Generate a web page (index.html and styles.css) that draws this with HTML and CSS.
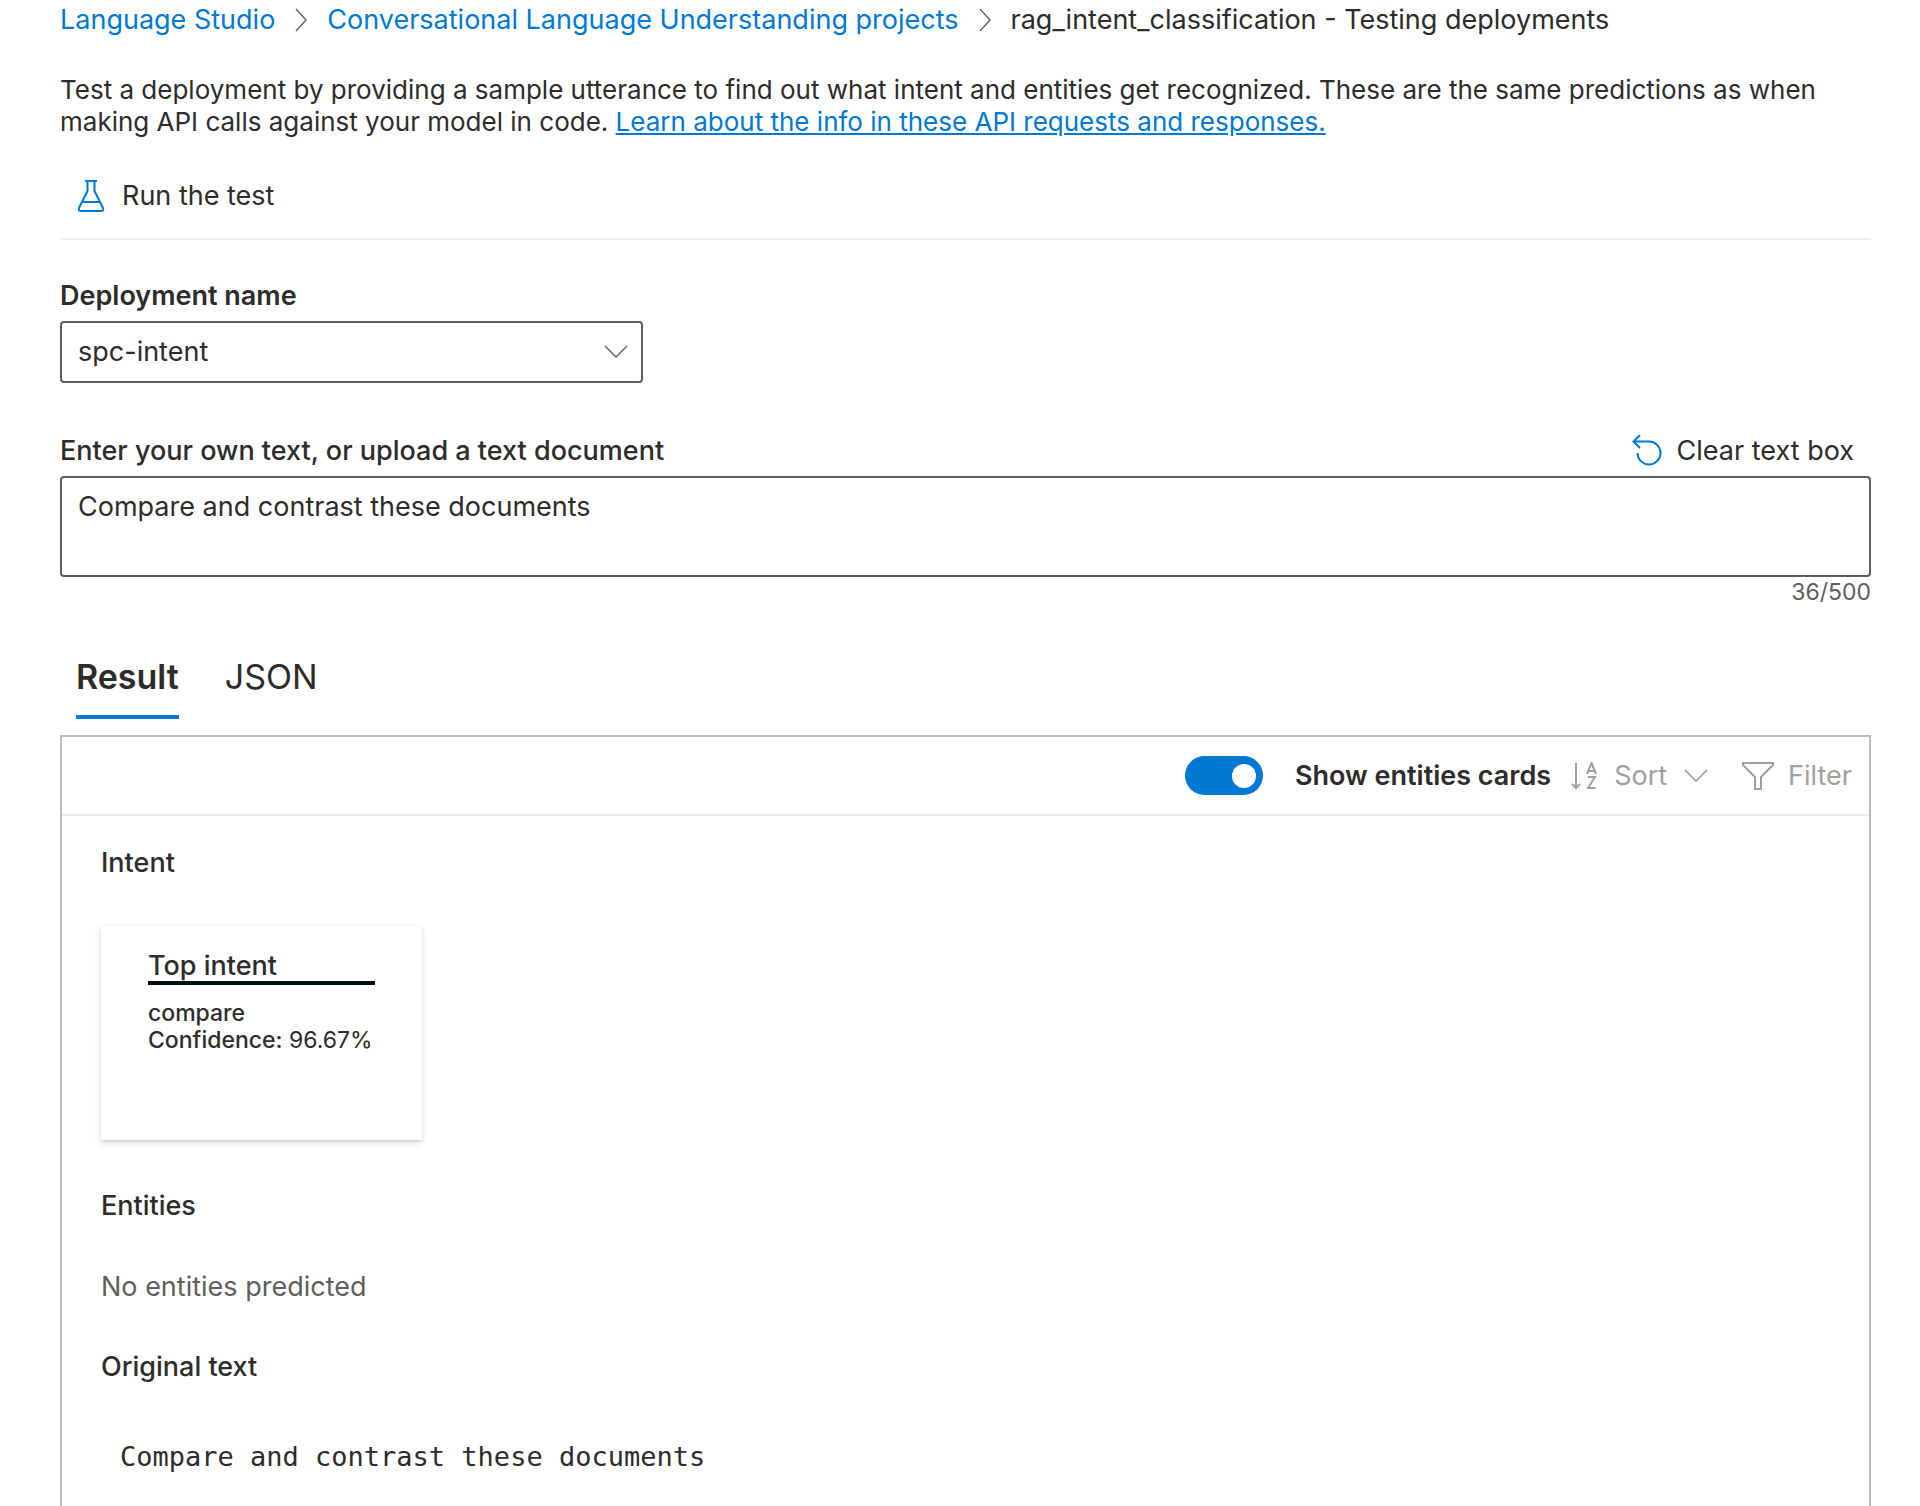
FILE: index.html
```html
<!DOCTYPE html>
<html lang="en">

<head>
    <meta charset="UTF-8">
    <meta name="viewport" content="width=device-width, initial-scale=1.0">
    <title>Testing deployments - Language Studio</title>
    <link rel="stylesheet" href="styles.css">
</head>

<body>
    <div class="page">
        <nav class="breadcrumb" aria-label="Breadcrumb">
            <a href="#">Language Studio</a>
            <svg class="separator" width="12" height="24" viewBox="0 0 12 24">
                <path d="M1 1 L11 12 L1 23" />
            </svg>
            <a href="#">Conversational Language Understanding projects</a>
            <svg class="separator" width="12" height="24" viewBox="0 0 12 24">
                <path d="M1 1 L11 12 L1 23" />
            </svg>
            <span>rag_intent_classification - Testing deployments</span>
        </nav>

        <p class="description">Test a deployment by providing a sample utterance to find out what intent and entities get recognized. These are the same predictions as when making API calls against your model in code. <a href="#">Learn about the info in these API requests and responses.</a></p>

        <div class="commands">
            <button type="button" class="command">
                <svg class="icon-blue" width="28" height="34" viewBox="0 0 28 34">
                    <path d="M8 2 H20 M10.500 2 V12 L2 29 Q1 32 4 32 H24 Q27 32 26 29 L17.500 12 V2 M5.500 23 H22.500" />
                </svg>
                Run the test
            </button>
        </div>

        <form>
            <label class="field-label" for="deployment">Deployment name</label>
            <div class="select-box">
                <select id="deployment">
                    <option>spc-intent</option>
                </select>
                <svg class="select-arrow" width="24" height="14" viewBox="0 0 24 14">
                    <path d="M1 1 L12 12 L23 1" />
                </svg>
            </div>

            <div class="text-header">
                <label for="utterance">Enter your own text, or upload a text document</label>
                <button type="button" class="command">
                    <svg class="icon-blue" width="30" height="32" viewBox="0 0 30 32">
                        <path d="M8 0 L1.500 6.500 L8 13 M1.500 6.500 H17 A11.500 11.500 0 1 1 5.500 18" />
                    </svg>
                    Clear text box
                </button>
            </div>
            <textarea id="utterance" maxlength="500">Compare and contrast these documents</textarea>
            <div class="counter">36/500</div>
        </form>

        <div class="tabs" role="tablist">
            <button type="button" class="tab active" role="tab" aria-selected="true">Result</button>
            <button type="button" class="tab" role="tab" aria-selected="false">JSON</button>
        </div>

        <div class="panel">
            <div class="panel-toolbar">
                <input type="checkbox" id="showCards" class="toggle" role="switch" checked>
                <label for="showCards" class="toggle-label">Show entities cards</label>
                <button type="button" class="sort-btn" disabled>
                    <svg width="26" height="28" viewBox="0 0 26 28">
                        <path d="M5 1 V26 M1 22 L5 26 L9 22" />
                        <path d="M16 12 L20.500 1 L25 12 M17.500 9 H23.500 M17 15 H24 L17 26 H24.500" />
                    </svg>
                    <span>Sort</span>
                    <svg class="chevron" width="24" height="14" viewBox="0 0 24 14">
                        <path d="M1 1 L12 12 L23 1" />
                    </svg>
                </button>
                <button type="button" class="filter-btn" disabled>
                    <svg width="32" height="28" viewBox="0 0 32 28">
                        <path d="M1 1 H31 V3 L19 15 V27 H13 V15 L1 3 Z" />
                    </svg>
                    <span>Filter</span>
                </button>
            </div>

            <div class="panel-content">
                <h2>Intent</h2>
                <div class="card">
                    <h3>Top intent</h3>
                    <div class="intent-name">compare</div>
                    <div><span class="confidence">Confidence:</span> 96.67%</div>
                </div>

                <h2>Entities</h2>
                <p class="empty">No entities predicted</p>

                <h2>Original text</h2>
                <p class="original-text">Compare and contrast these documents</p>
            </div>
        </div>
    </div>
</body>

</html>
```
FILE: styles.css
```css
* {
    box-sizing: border-box;
}

body {
    font-family: Inter, "Liberation Sans", sans-serif;
    font-size: 27px;
    line-height: 32px;
    margin: 0;
    background-color: #fff;
    color: #2d2c2b;
}

h2,
h3,
p {
    margin: 0;
    font-size: 27px;
    font-weight: 500;
}

a {
    color: #0078d4;
}

button,
select,
textarea {
    font: inherit;
    color: inherit;
    background: none;
    border: none;
    padding: 0;
    margin: 0;
}

button {
    cursor: pointer;
}

svg {
    display: block;
    flex-shrink: 0;
    fill: none;
    stroke: currentColor;
    stroke-width: 2;
}

.page {
    display: flex;
    flex-direction: column;
    min-height: 100vh;
    padding: 4px 49px 0 60px;
}

.breadcrumb {
    display: flex;
    align-items: center;
    gap: 20px;
}

.breadcrumb a {
    text-decoration: none;
}

.separator {
    color: #605e5c;
    stroke-width: 1.4;
}

.description {
    margin-top: 38px;
    font-size: 26px;
    font-weight: 400;
}

.commands {
    margin-top: 14px;
    padding: 2px 0 0 17px;
    border-bottom: 2px solid #f0efee;
}

.command {
    display: flex;
    align-items: center;
    gap: 17px;
}

.commands .command {
    height: 84px;
}

.icon-blue {
    color: #0078d4;
}

.field-label {
    display: block;
    margin: 40px 0 9px;
    font-weight: 600;
}

.select-box {
    position: relative;
    width: 583px;
    max-width: 100%;
}

.select-box select {
    display: block;
    width: 100%;
    height: 62px;
    padding: 0 50px 0 16px;
    border: 2px solid #605e5c;
    border-radius: 4px;
    appearance: none;
}

.select-arrow {
    position: absolute;
    top: 24px;
    right: 15px;
    color: #605e5c;
    stroke-width: 1.4;
    pointer-events: none;
}

.text-header {
    display: flex;
    justify-content: space-between;
    margin: 52px 0 9px;
    font-weight: 500;
}

.text-header .command {
    margin-right: 17px;
    gap: 15px;
    font-weight: 400;
}

textarea {
    display: block;
    width: 100%;
    height: 101px;
    padding: 13px 16px;
    border: 2px solid #605e5c;
    border-radius: 4px;
    resize: none;
}

.counter {
    font-size: 23px;
    line-height: 30px;
    text-align: right;
    color: #605e5c;
}

.tabs {
    display: flex;
    gap: 46px;
    margin: 50px 0 16px;
    padding-left: 16px;
}

.tab {
    padding-bottom: 18px;
    font-size: 34px;
    line-height: 40px;
    border-bottom: 4px solid transparent;
}

.tab.active {
    font-weight: 600;
    border-bottom-color: #0078d4;
}

.panel {
    flex: 1;
    border: 2px solid #bdbdb9;
    border-bottom: none;
}

.panel-toolbar {
    display: flex;
    align-items: center;
    justify-content: flex-end;
    height: 79px;
    padding-right: 17px;
    border-bottom: 2px solid #ebebea;
}

.toggle {
    width: 78px;
    height: 39px;
    margin: 0 32px 0 0;
    padding: 0 7px;
    display: flex;
    align-items: center;
    justify-content: flex-end;
    appearance: none;
    background-color: #0078d4;
    border-radius: 20px;
}

.toggle::before {
    content: "";
    width: 24px;
    height: 24px;
    border-radius: 50%;
    background-color: #fff;
}

.toggle:not(:checked) {
    justify-content: flex-start;
    background-color: #605e5c;
}

.toggle-label {
    font-weight: 600;
}

.sort-btn,
.filter-btn {
    display: flex;
    align-items: center;
    color: #a19f9d;
    cursor: default;
}

.sort-btn {
    gap: 17px;
    margin-left: 20px;
}

.chevron {
    stroke-width: 1.6;
}

.filter-btn {
    gap: 14px;
    margin-left: 34px;
}

.panel-content {
    padding: 31px 39px;
}

.card {
    width: 321px;
    height: 214px;
    margin: 47px 0 50px;
    padding: 25px 47px;
    font-size: 23px;
    line-height: 27px;
    white-space: nowrap;
    box-shadow: 0 3px 7px rgba(0, 0, 0, 0.13), 0 1px 2px rgba(0, 0, 0, 0.11);
}

.card h3 {
    margin-bottom: 15px;
    line-height: 30px;
    border-bottom: 4px solid #001018;
}

.intent-name,
.confidence {
    font-weight: 500;
}

.empty {
    margin: 49px 0 48px;
    font-weight: 400;
    color: #605e5c;
}

.original-text {
    margin-top: 58px;
    padding-left: 19px;
    font-family: "DejaVu Sans Mono", monospace;
    font-weight: 400;
}
```
